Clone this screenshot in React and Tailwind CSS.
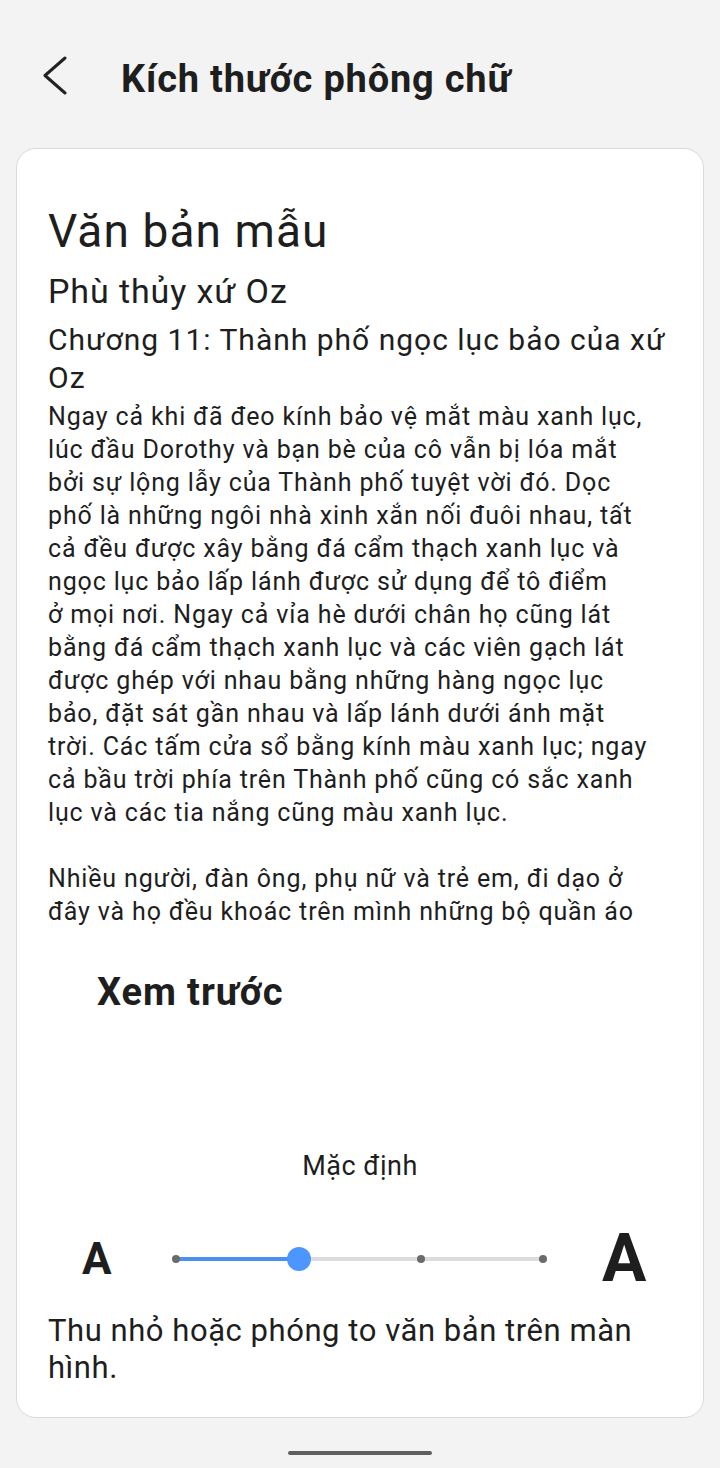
import React from "react";

const bodyLines = [
  "Ngay cả khi đã đeo kính bảo vệ mắt màu xanh lục,",
  "lúc đầu Dorothy và bạn bè của cô vẫn bị lóa mắt",
  "bởi sự lộng lẫy của Thành phố tuyệt vời đó. Dọc",
  "phố là những ngôi nhà xinh xắn nối đuôi nhau, tất",
  "cả đều được xây bằng đá cẩm thạch xanh lục và",
  "ngọc lục bảo lấp lánh được sử dụng để tô điểm",
  "ở mọi nơi. Ngay cả vỉa hè dưới chân họ cũng lát",
  "bằng đá cẩm thạch xanh lục và các viên gạch lát",
  "được ghép với nhau bằng những hàng ngọc lục",
  "bảo, đặt sát gần nhau và lấp lánh dưới ánh mặt",
  "trời. Các tấm cửa sổ bằng kính màu xanh lục; ngay",
  "cả bầu trời phía trên Thành phố cũng có sắc xanh",
  "lục và các tia nắng cũng màu xanh lục.",
];

const secondLines = [
  "Nhiều người, đàn ông, phụ nữ và trẻ em, đi dạo ở",
  "đây và họ đều khoác trên mình những bộ quần áo",
];

function SizeSlider() {
  // 4 stops, current = 1
  const stops = [4, 127, 249, 371];
  return (
    <div className="relative h-[24px] w-[375px]">
      <div className="absolute left-[4px] right-[4px] top-[10px] h-[4px] rounded-full bg-[#dcdcdc]" />
      <div className="absolute left-[4px] top-[10px] h-[4px] w-[123px] rounded-full bg-[#4a8ff2]" />
      <div className="absolute left-0 top-[8px] size-[8px] rounded-full bg-[#6b6b6b]" />
      <div className="absolute left-[245px] top-[8px] size-[8px] rounded-full bg-[#6b6b6b]" />
      <div className="absolute left-[367px] top-[8px] size-[8px] rounded-full bg-[#6b6b6b]" />
      <div
        className="absolute top-0 size-[24px] rounded-full bg-[#4d95ff]"
        style={{ left: stops[1] - 12 }}
      />
    </div>
  );
}

export default function App() {
  return (
    <div className="h-[1468px] bg-[#f3f3f3] font-['Roboto',sans-serif] text-[#1e1e1e] flex flex-col">
      {/* header */}
      <div className="h-[148px] flex items-start pt-[55px] pl-[40px]">
        <svg width="30" height="40" viewBox="0 0 30 40" fill="none">
          <path
            d="M25 3 L5 20.5 L25 38"
            stroke="#222"
            strokeWidth="3"
            strokeLinecap="round"
            strokeLinejoin="round"
          />
        </svg>
        <h1 className="ml-[51px] mt-[2px] text-[38px] leading-[44px] font-bold tracking-[0.8px]">
          Kích thước phông chữ
        </h1>
      </div>

      {/* card */}
      <div className="mx-[16px] h-[1270px] rounded-[20px] border border-[#dadada] bg-white overflow-hidden">
        <div className="h-[786px] overflow-hidden pl-[31px] pr-[10px] pt-[55px]">
          <div className="text-[46px] leading-[54px] tracking-[1.1px]">Văn bản mẫu</div>
          <div className="mt-[11px] text-[34px] leading-[44px] tracking-[0.9px]">
            Phù thủy xứ Oz
          </div>
          <div className="mt-[8px] text-[30px] leading-[38px] tracking-[1px]">
            Chương 11: Thành phố ngọc lục bảo của xứ
            <br />
            Oz
          </div>
          <div className="mt-[3px] text-[25px] leading-[33px] tracking-[0.85px] whitespace-nowrap">
            {bodyLines.map((l, i) => (
              <div key={i}>{l}</div>
            ))}
            <div className="h-[33px]" />
            {secondLines.map((l, i) => (
              <div key={i}>{l}</div>
            ))}
          </div>
        </div>

        <div className="mt-[34px] pl-[80px] text-[38px] leading-[46px] font-bold tracking-[0.9px]">
          Xem trước
        </div>

        <div className="mt-[134px] text-center text-[27px] leading-[34px] tracking-[0.5px]">
          Mặc định
        </div>

        <div className="mt-[46px] h-[60px] flex items-center pl-[65px]">
          <span className="w-[90px] text-[44px] leading-[44px] font-bold">A</span>
          <SizeSlider />
          <span className="ml-[55px] text-[66px] leading-[66px] font-bold">A</span>
        </div>

        <div className="mt-[23px] pl-[31px] pr-[20px] text-[31px] leading-[37px] tracking-[0.55px]">
          Thu nhỏ hoặc phóng to văn bản trên màn hình.
        </div>
      </div>

      {/* home indicator */}
      <div className="flex-1 flex items-end justify-center pb-[13px]">
        <div className="h-[4px] w-[144px] rounded-full bg-[#5f5f5f]" />
      </div>
    </div>
  );
}
